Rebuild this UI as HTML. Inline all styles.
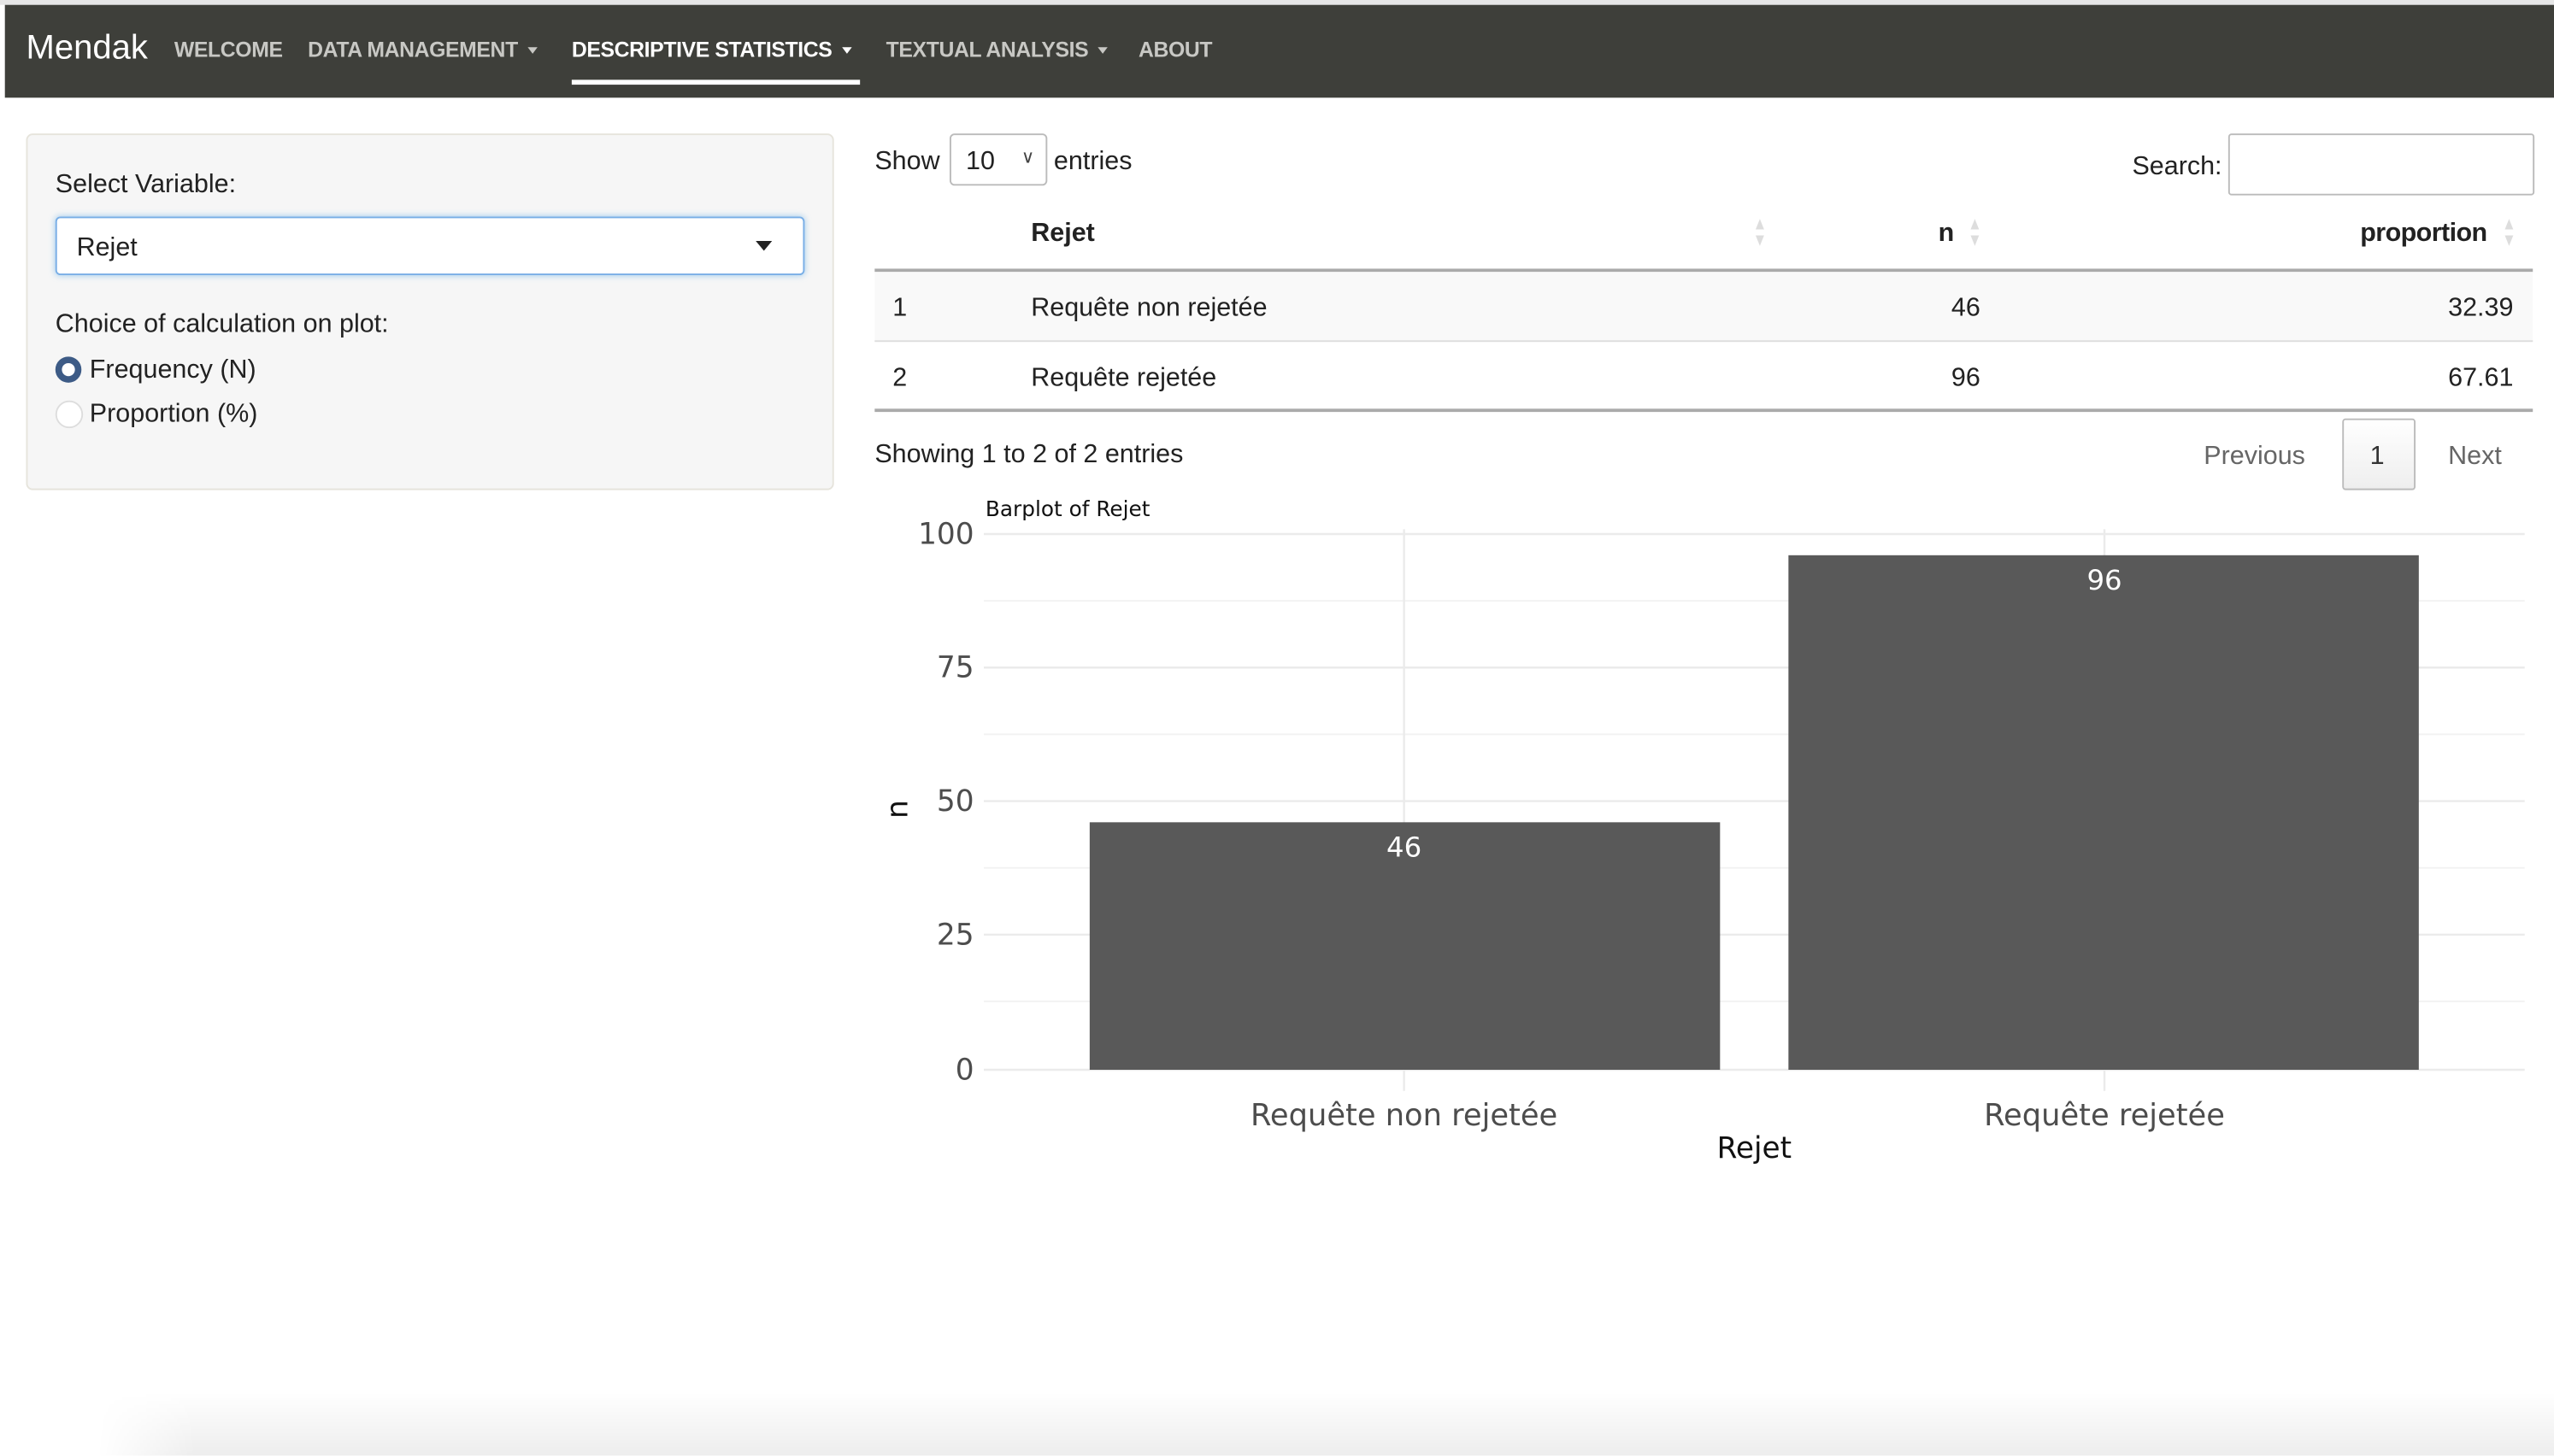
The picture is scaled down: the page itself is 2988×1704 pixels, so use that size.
<!DOCTYPE html>
<html><head><meta charset="utf-8"><style>
html,body{margin:0;padding:0;background:#fff;overflow:hidden;width:2988px;height:1704px}
#w{position:absolute;left:0;top:0;width:1568px;height:894px;transform:scale(1.90561);transform-origin:0 0;font-family:"Liberation Sans",sans-serif;color:#222}
.a{position:absolute;white-space:nowrap}
.nav{position:absolute;left:3px;top:3px;width:1565px;height:57px;background:#3e3f3a}
.ni{position:absolute;top:23px;font-size:13px;color:#c8c8c4;font-weight:bold;letter-spacing:-0.2px}
.car{display:inline-block;width:0;height:0;border-left:3.5px solid transparent;border-right:3.5px solid transparent;border-top:4px solid currentColor;vertical-align:middle;margin-left:6px;margin-top:-2px}
.t{font-size:16px;color:#222;margin-top:1.5px}
.s{position:absolute;font-size:11px;color:#ddd;line-height:10px;transform:scaleX(0.8)}
</style></head><body><div id="w">
<div class="a" style="left:0;top:0;width:1568px;height:3px;background:#e6e6e6"></div>
<div class="nav"></div>
<div class="a" style="left:16px;top:18px;font-size:21px;color:#fff">Mendak</div>
<div class="ni" style="left:107px">WELCOME</div>
<div class="ni" style="left:189px">DATA MANAGEMENT<span class="car"></span></div>
<div class="ni" style="left:351px;color:#fff">DESCRIPTIVE STATISTICS<span class="car"></span></div>
<div class="a" style="left:351px;top:49px;width:177px;height:3px;background:#fff"></div>
<div class="ni" style="left:544px">TEXTUAL ANALYSIS<span class="car"></span></div>
<div class="ni" style="left:699px">ABOUT</div>

<div class="a" style="left:16px;top:82px;width:494px;height:217px;background:#f6f6f6;border:1px solid #e6e4dc;border-radius:4px"></div>
<div class="a t" style="left:34px;top:103px">Select Variable:</div>
<div class="a" style="left:34px;top:133px;width:458px;height:34px;background:#fff;border:1px solid #79aee6;border-radius:3px;box-shadow:0 0 4px rgba(102,175,233,.6)"></div>
<div class="a t" style="left:47px;top:142px">Rejet</div>
<div class="a" style="left:464px;top:148px;width:0;height:0;border-left:5px solid transparent;border-right:5px solid transparent;border-top:6px solid #222"></div>
<div class="a t" style="left:34px;top:189px">Choice of calculation on plot:</div>
<div class="a" style="left:34px;top:219px;width:8px;height:8px;border:4px solid #3d5b86;border-radius:50%;background:#fff"></div>
<div class="a t" style="left:55px;top:217px">Frequency (N)</div>
<div class="a" style="left:34px;top:246px;width:15px;height:15px;border:1px solid #ddd;border-radius:50%;background:#fff"></div>
<div class="a t" style="left:55px;top:244px">Proportion (%)</div>

<div class="a t" style="left:537px;top:89px">Show</div>
<div class="a" style="left:583px;top:82px;width:58px;height:30px;border:1px solid #bbb;border-radius:3px;background:#fff"></div>
<div class="a t" style="left:593px;top:89px">10</div>
<div class="a" style="left:627px;top:90px;font-size:11px;color:#444">&#x2228;</div>
<div class="a t" style="left:647px;top:89px">entries</div>
<div class="a t" style="left:1309px;top:92px">Search:</div>
<div class="a" style="left:1368px;top:82px;width:186px;height:36px;border:1px solid #bbb;border-radius:2px;background:#fff"></div>

<div class="a t" style="left:633px;top:133px;font-weight:bold">Rejet</div>
<div class="s" style="left:1075px;top:133px">&#9650;<br>&#9660;</div>
<div class="a t" style="left:1190px;top:133px;font-weight:bold">n</div>
<div class="s" style="left:1207px;top:133px">&#9650;<br>&#9660;</div>
<div class="a t" style="left:1449px;top:133px;font-weight:bold;letter-spacing:-0.3px">proportion</div>
<div class="s" style="left:1535px;top:133px">&#9650;<br>&#9660;</div>
<div class="a" style="left:537px;top:165px;width:1018px;height:2px;background:#aaa"></div>
<div class="a" style="left:537px;top:167px;width:1018px;height:42px;background:#f9f9f9;border-bottom:1px solid #ddd"></div>
<div class="a t" style="left:548px;top:179px">1</div>
<div class="a t" style="left:633px;top:179px">Requête non rejetée</div>
<div class="a t" style="left:1198px;top:179px">46</div>
<div class="a t" style="left:1503px;top:179px">32.39</div>
<div class="a t" style="left:548px;top:222px">2</div>
<div class="a t" style="left:633px;top:222px">Requête rejetée</div>
<div class="a t" style="left:1198px;top:222px">96</div>
<div class="a t" style="left:1503px;top:222px">67.61</div>
<div class="a" style="left:537px;top:251px;width:1018px;height:2px;background:#aaa"></div>
<div class="a t" style="left:537px;top:269px">Showing 1 to 2 of 2 entries</div>
<div class="a t" style="left:1353px;top:270px;color:#666">Previous</div>
<div class="a" style="left:1438px;top:257px;width:43px;height:42px;border:1px solid #bbb;border-radius:2px;background:linear-gradient(#fff,#eee)"></div>
<div class="a t" style="left:1455px;top:270px;color:#333">1</div>
<div class="a t" style="left:1503px;top:270px;color:#666">Next</div>

<svg class="a" style="left:0;top:0" width="1568" height="894" font-family="DejaVu Sans, sans-serif">
<g stroke="#f2f2f2" stroke-width="1"><line x1="604" x2="1550" y1="369" y2="369"/><line x1="604" x2="1550" y1="451" y2="451"/><line x1="604" x2="1550" y1="533" y2="533"/><line x1="604" x2="1550" y1="615" y2="615"/></g>
<g stroke="#ebebeb" stroke-width="1.3"><line x1="604" x2="1550" y1="328" y2="328"/><line x1="604" x2="1550" y1="410" y2="410"/><line x1="604" x2="1550" y1="492" y2="492"/><line x1="604" x2="1550" y1="574" y2="574"/><line x1="604" x2="1550" y1="657" y2="657"/><line x1="862" x2="862" y1="325" y2="670"/><line x1="1292" x2="1292" y1="325" y2="670"/></g>
<rect x="669" y="505" width="387" height="152" fill="#595959"/>
<rect x="1098" y="341" width="387" height="316" fill="#595959"/>
<g fill="#fff" font-size="17" text-anchor="middle"><text x="862" y="526">46</text><text x="1292" y="362">96</text></g>
<text x="605" y="317" font-size="13" fill="#111">Barplot of Rejet</text>
<g fill="#4d4d4d" font-size="18" text-anchor="end"><text x="598" y="334">100</text><text x="598" y="416">75</text><text x="598" y="498">50</text><text x="598" y="580">25</text><text x="598" y="663">0</text></g>
<g fill="#4d4d4d" font-size="18.5" text-anchor="middle"><text x="862" y="691">Requête non rejetée</text><text x="1292" y="691">Requête rejetée</text></g>
<text x="1077" y="711" font-size="18" text-anchor="middle" fill="#111">Rejet</text>
<text transform="translate(557,497) rotate(-90)" font-size="18" text-anchor="middle" fill="#111">n</text>
</svg>
<div class="a" style="left:60px;top:855px;width:1508px;height:39px;background:linear-gradient(rgba(0,0,0,0),rgba(0,0,0,.07));-webkit-mask:linear-gradient(90deg,transparent 0,#000 60px)"></div>
</div></body></html>
